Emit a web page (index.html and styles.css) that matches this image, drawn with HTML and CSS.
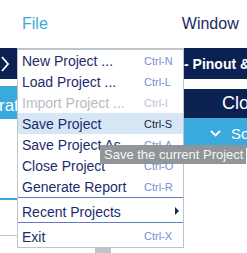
FILE: index.html
```html
<!DOCTYPE html>
<html lang="en">
<head>
  <meta charset="UTF-8" />
  <title>Project Menu</title>
  <link rel="stylesheet" href="styles.css">
</head>
<body>

  <div class="page">
    <header class="topbar">
      <span class="topbar-file">File</span>
      <span class="topbar-window">Window</span>
    </header>

    <div class="main">
      <div class="left">
        <div class="left-nav">
          <svg width="8" height="16" viewBox="0 0 8 16"><polyline points="1,1 7,8 1,15" fill="none" stroke="#fff" stroke-width="1.8"/></svg>
        </div>
        <div class="left-tab">ration</div>
        <div class="left-line-blue"></div>
        <div class="left-line-grey"></div>
      </div>

      <div class="center">
        <div class="scroll-stub"></div>
      </div>

      <div class="right">
        <div class="title-bar">- Pinout &amp; Configuration</div>
        <div class="close-bar">Close</div>
        <div class="section-bar">
          <svg class="section-chevron" width="11" height="7" viewBox="0 0 11 7"><polyline points="1,1 5.5,5.5 10,1" fill="none" stroke="#fff" stroke-width="1.8"/></svg>
          <span>Software Packs</span>
        </div>
      </div>
    </div>

    <div class="dropdown">
      <div class="item"><span class="label">New Project ...</span><span class="shortcut">Ctrl-N</span></div>
      <div class="item"><span class="label">Load Project ...</span><span class="shortcut">Ctrl-L</span></div>
      <div class="item disabled"><span class="label">Import Project ...</span><span class="shortcut">Ctrl-I</span></div>
      <div class="item active"><span class="label">Save Project</span><span class="shortcut">Ctrl-S</span></div>
      <div class="item"><span class="label">Save Project As ...</span><span class="shortcut">Ctrl-A</span></div>
      <div class="item"><span class="label">Close Project</span><span class="shortcut">Ctrl-O</span></div>
      <div class="item"><span class="label">Generate Report</span><span class="shortcut">Ctrl-R</span></div>
      <div class="separator"></div>
      <div class="item item-recent"><span class="label">Recent Projects</span><span class="submenu-arrow"></span></div>
      <div class="separator"></div>
      <div class="item item-exit"><span class="label">Exit</span><span class="shortcut">Ctrl-X</span></div>
    </div>

    <div class="tooltip">Save the current Project</div>
  </div>

</body>
</html>
```

FILE: styles.css
```css
body {
  margin: 0;
  font-family: "Liberation Sans", Arial, sans-serif;
  background-color: #fff;
}
.page {
  position: relative;
  width: 247px;
  height: 253px;
  overflow: hidden;
}
.topbar {
  height: 48px;
  display: flex;
  align-items: center;
  font-size: 16px;
}
.topbar-file {
  margin-left: 22px;
  color: #3ca9dd;
}
.topbar-window {
  margin-left: 134px;
  color: #1a2a5e;
}
.main {
  display: flex;
  height: 205px;
}
.left {
  width: 17px;
  overflow: hidden;
}
.left-nav {
  height: 31px;
  background-color: #0b2152;
  display: flex;
  align-items: center;
  padding-left: 1px;
}
.left-tab {
  margin-top: 7px;
  height: 33px;
  line-height: 40px;
  background-color: #3aa9dc;
  color: #fff;
  font-size: 17px;
  white-space: nowrap;
  text-indent: -1px;
}
.left-line-blue {
  margin-top: 79px;
  height: 2px;
  background-color: #3aa9dc;
}
.left-line-grey {
  margin-top: 35px;
  height: 1px;
  background-color: #bcc5ca;
}
.center {
  width: 166px;
  border-top: 2px solid #bcc5ca;
}
.scroll-stub {
  margin-top: 198px;
  margin-left: 78px;
  width: 16px;
  height: 5px;
  background-color: #bcc5ca;
}
.right {
  flex: 1;
  overflow: hidden;
  white-space: nowrap;
}
.title-bar {
  height: 31px;
  display: flex;
  align-items: center;
  padding-left: 1px;
  background-color: #0b2152;
  color: #fff;
  font-size: 14px;
  font-weight: bold;
}
.close-bar {
  margin-top: 10px;
  height: 29px;
  display: flex;
  align-items: center;
  padding-left: 39px;
  background-color: #0b2152;
  color: #fff;
  font-size: 18px;
}
.section-bar {
  height: 30px;
  display: flex;
  align-items: center;
  gap: 10px;
  padding-left: 27px;
  background-color: #3aa9dc;
  color: #fff;
  font-size: 15px;
}
.section-chevron {
  flex-shrink: 0;
}
.dropdown {
  position: absolute;
  left: 17px;
  top: 48px;
  width: 165px;
  background-color: #fff;
  border: 1px solid #bcc5cc;
  border-top-width: 2px;
}
.item {
  height: 21px;
  display: flex;
  align-items: center;
  padding-left: 4px;
  color: #1d2b6c;
  font-size: 14px;
  white-space: nowrap;
}
.label {
  flex: 1;
  padding-top: 1px;
}
.shortcut {
  width: 39px;
  font-size: 11px;
  color: #7a8dd5;
}
.item.disabled .label {
  color: #b7bbc3;
}
.item.disabled .shortcut {
  color: #bcc3dc;
}
.item.active {
  background-color: #d7e6f4;
}
.item.active .shortcut {
  color: #1c1f3a;
}
.item-recent {
  height: 24px;
  padding-top: 2px;
  box-sizing: border-box;
}
.item-exit {
  height: 24px;
  padding-top: 2px;
  box-sizing: border-box;
}
.separator {
  height: 1px;
  background-color: #5f7ebf;
}
.submenu-arrow {
  width: 0;
  height: 0;
  margin-right: 4px;
  border-left: 4px solid #1b2a5c;
  border-top: 4px solid transparent;
  border-bottom: 4px solid transparent;
}
.tooltip {
  position: absolute;
  left: 100px;
  top: 145px;
  width: 142px;
  height: 19px;
  padding-left: 4px;
  line-height: 19px;
  background-color: #8f9599;
  color: #f5f5f5;
  font-size: 13px;
  white-space: nowrap;
}
```
